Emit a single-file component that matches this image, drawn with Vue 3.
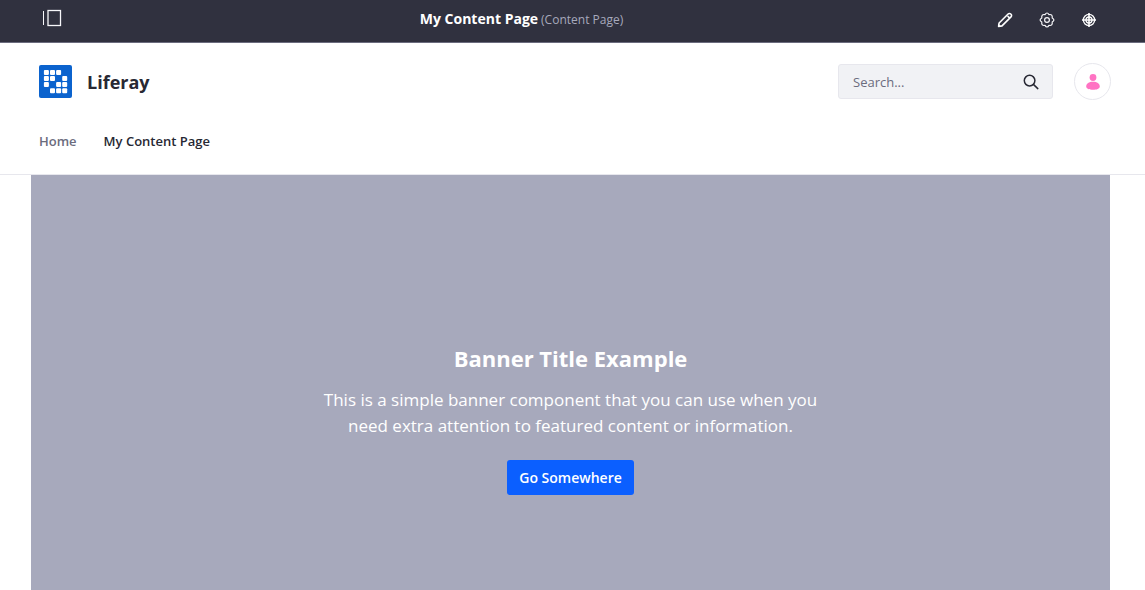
<script setup>
import { ref } from 'vue'

const query = ref('')

const logoDots = [
  [0, 0], [1, 0], [2, 0],
  [0, 1], [1, 1], [3, 1],
  [0, 2], [2, 2], [3, 2],
  [1, 3], [2, 3], [3, 3],
]
</script>

<template>
  <div class="page">
    <header class="control-bar">
      <button class="icon-button" type="button" aria-label="Toggle product menu">
        <svg width="20" height="18" viewBox="0 0 20 18" fill="none" stroke="#f7f7fa">
          <path d="M1.5 2v14" />
          <rect x="6" y="1.5" width="12.5" height="15" stroke-width="1.3" />
        </svg>
      </button>
      <div class="page-name">
        <strong>My Content Page</strong>
        <span>(Content Page)</span>
      </div>
      <div class="tools">
        <button class="icon-button" type="button" aria-label="Edit">
          <svg width="16" height="16" viewBox="0 0 16 16" fill="none" stroke="#fff" stroke-width="1.6" stroke-linejoin="round">
            <path d="M1.6 14.4l.5-3.4 9-9a1.8 1.8 0 0 1 2.6 0l.3.3a1.8 1.8 0 0 1 0 2.6l-9 9zM10.6 4l1.6 1.6" />
            <path d="M1 15v-3.4l3.4 3.4z" fill="#fff" stroke="none" />
          </svg>
        </button>
        <button class="icon-button" type="button" aria-label="Configure page">
          <svg width="16" height="16" viewBox="0 0 16 16" fill="none" stroke="#f7f7fa" stroke-width="1.2" stroke-linejoin="round">
            <path d="M6 2.6Q8-.6 10 2.6Q13.8 1.9 13.2 6Q16.6 8 13.2 10Q13.8 14.1 10 13.4Q8 16.6 6 13.4Q2.2 14.1 2.8 10Q-.6 8 2.8 6Q2.2 1.9 6 2.6z" />
            <circle cx="8" cy="8" r="2.4" />
          </svg>
        </button>
        <button class="icon-button" type="button" aria-label="Simulation">
          <svg width="16" height="16" viewBox="0 0 16 16" fill="none" stroke="#fff" stroke-width="1.3">
            <circle cx="8" cy="8" r="5.6" />
            <circle cx="8" cy="8" r="3" />
            <path d="M8 1v14M1 8h14" stroke-width="1.6" />
          </svg>
        </button>
      </div>
    </header>

    <div class="site-header">
      <div class="brand-row">
        <a class="brand" href="#">
          <svg width="33" height="33" viewBox="0 0 33 33">
            <rect width="33" height="33" rx="2" fill="#0b63ce" />
            <rect
              v-for="([col, row], i) in logoDots"
              :key="i"
              :x="4.9 + col * 6.1"
              :y="4.9 + row * 6.1"
              width="5"
              height="5"
              rx="1"
              fill="#fff"
            />
          </svg>
          <span>Liferay</span>
        </a>
        <form class="search" role="search" @submit.prevent>
          <input v-model="query" type="text" placeholder="Search..." aria-label="Search" />
          <button class="icon-button" type="submit" aria-label="Submit search">
            <svg width="16" height="16" viewBox="0 0 16 16" fill="none" stroke="#272833" stroke-width="1.5" stroke-linecap="round">
              <circle cx="6.6" cy="6.6" r="5.3" />
              <path d="M10.4 10.4l4.4 4.2" />
            </svg>
          </button>
        </form>
        <button class="avatar" type="button" aria-label="User menu">
          <svg width="16" height="18" viewBox="0 0 16 18" fill="#ff73c3">
            <circle cx="8" cy="4.5" r="3.4" />
            <path d="M8 8.8c4 0 6.8 1.8 6.8 4.7 0 2.4-3.2 3.3-6.8 3.3s-6.8-.9-6.8-3.3c0-2.9 2.8-4.7 6.8-4.7z" />
          </svg>
        </button>
      </div>
      <nav class="site-nav">
        <a href="#">Home</a>
        <a class="active" href="#" aria-current="page">My Content Page</a>
      </nav>
    </div>

    <main class="banner">
      <h1>Banner Title Example</h1>
      <p>This is a simple banner component that you can use when you need extra attention to featured content or information.</p>
      <a class="cta" href="#">Go Somewhere</a>
    </main>
  </div>
</template>

<style>
body {
  margin: 0;
}
</style>

<style scoped>
.page {
  display: flex;
  flex-direction: column;
  min-height: 100vh;
  background: #fff;
  color: #272833;
  font-family: "Open Sans", "Noto Sans", sans-serif;
  font-size: 13px;
}
.page * {
  box-sizing: border-box;
}
a {
  color: inherit;
  text-decoration: none;
}
svg {
  display: block;
}
.icon-button {
  padding: 0;
  border: 0;
  background: none;
  cursor: pointer;
}
.control-bar {
  display: grid;
  grid-template-columns: 1fr auto 1fr;
  align-items: start;
  height: 43px;
  padding: 9px 48px 0 42px;
  border-bottom: 1px solid #6b6c7e;
  background: #30313f;
}
.control-bar > .icon-button {
  justify-self: start;
}
.page-name {
  display: flex;
  align-items: baseline;
  gap: 3px;
  margin-right: 96px;
  color: #a7a9bc;
  font-size: 12px;
  line-height: 20px;
  white-space: nowrap;
}
.page-name strong {
  color: #fff;
  font-size: 14px;
}
.tools {
  display: flex;
  justify-content: flex-end;
  gap: 26px;
  padding-top: 3px;
}
.site-header {
  padding: 20px 34px 23px 39px;
  border-bottom: 1px solid #e7e7ed;
}
.brand-row {
  display: flex;
  align-items: center;
}
.brand {
  display: flex;
  align-items: center;
  gap: 15px;
  margin-right: auto;
  font-size: 18px;
  font-weight: 700;
}
.search {
  display: flex;
  align-items: center;
  width: 215px;
  height: 35px;
  padding: 0 13px 0 14px;
  border: 1px solid #e7e7ed;
  border-radius: 3px;
  background: #f1f2f5;
}
.search input {
  flex: 1;
  min-width: 0;
  padding: 0;
  border: 0;
  outline: 0;
  background: none;
  color: inherit;
  font: inherit;
}
.search input::placeholder {
  color: #6b6c7e;
  opacity: 1;
}
.avatar {
  display: grid;
  place-items: center;
  width: 37px;
  height: 37px;
  margin-left: 21px;
  padding: 0;
  border: 1px solid #e7e7ed;
  border-radius: 50%;
  background: #fff;
}
.site-nav {
  display: flex;
  gap: 27px;
  margin-top: 31px;
  font-weight: 600;
  line-height: 20px;
}
.site-nav a {
  color: #6b6c7e;
}
.site-nav .active {
  color: #272833;
}
.banner {
  display: flex;
  flex: 1;
  flex-direction: column;
  align-items: center;
  margin: 0 35px 0 31px;
  padding: 167px 24px 94px;
  background: #a7a9bc;
  color: #fff;
  text-align: center;
}
.banner h1 {
  margin: 0;
  font-size: 22px;
  line-height: 32px;
}
.banner p {
  max-width: 500px;
  margin: 13px 0 21px;
  font-size: 17px;
  line-height: 26px;
}
.cta {
  padding: 0 12px;
  border-radius: 3px;
  background: #0b5fff;
  font-size: 14px;
  font-weight: 600;
  line-height: 35px;
}
</style>
